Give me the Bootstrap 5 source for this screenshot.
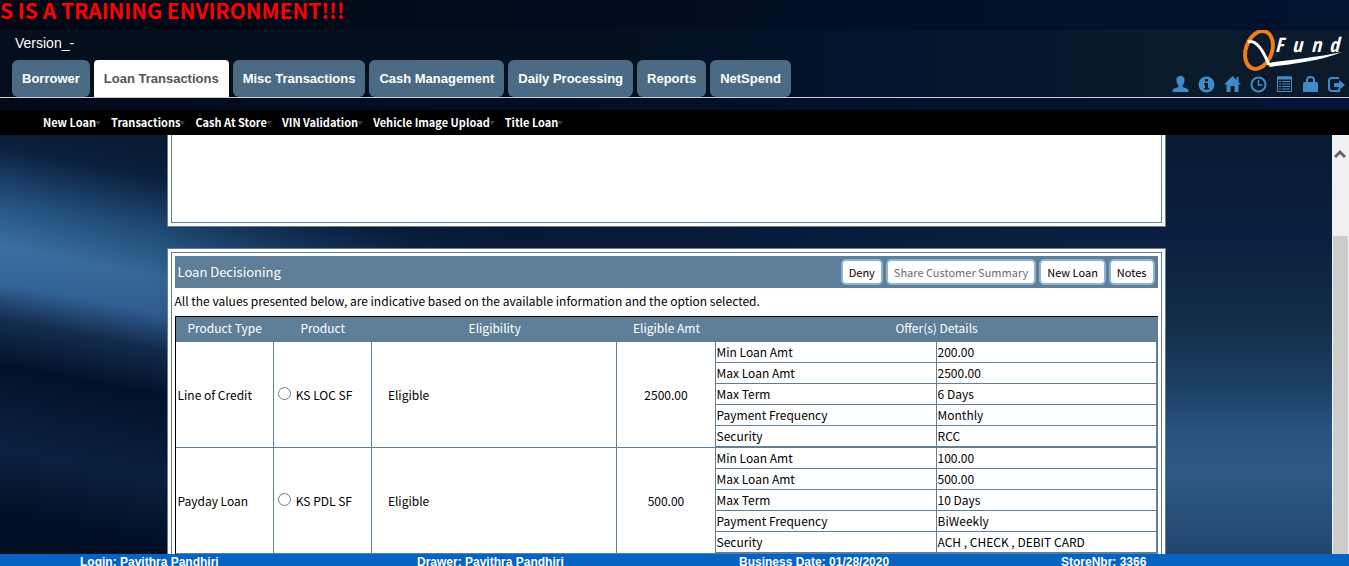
<!DOCTYPE html>
<html lang="en">
<head>
<meta charset="utf-8">
<meta name="viewport" content="width=device-width, initial-scale=1">
<title>QFund - Loan Transactions</title>
<link href="https://cdn.jsdelivr.net/npm/bootstrap@5.3.0/dist/css/bootstrap.min.css" rel="stylesheet">
<style>
  :root { --steel: #5f7f98; --tab: #4b6a84; --icon: #428bca; }
  body { font-family: "Noto Sans CJK SC", "Open Sans", sans-serif; font-size: 12px; line-height: 18px; color: #000; background: #020b1c; }
  .arial { font-family: "Liberation Sans", Arial, sans-serif; }
  .notice { height: 30px; font-size: 21px; line-height: 20px; color: #f00; background: linear-gradient(90deg, #010814, #020d20 50%, #021330); }
  .masthead { background: linear-gradient(90deg, #050f1c, #04101f 45%, #03132c 65%, #091a2b 85%, #0a1a2a); border-bottom: 1px solid #c8ced4; }
  .version { font-size: 14px; line-height: 20px; color: #fff; padding: 3px 15px 7px; }
  .tabs { gap: 4px; padding-left: 12px; }
  .tab-link { font-size: 13px; font-weight: 700; line-height: 37px; padding: 0 10px; color: #fff; background: var(--tab); border-radius: 6px; text-decoration: none; }
  .tab-link.active { color: #555; background: #fff; border-radius: 4px 4px 0 0; }
  .tools { gap: 9px; padding: 0 4px 4px 0; }
  .tools a { display: block; line-height: 0; color: var(--icon); }
  .gap-strip { height: 12px; background: linear-gradient(90deg, #020a1a, #020f27 50%, #041636); }
  .submenu { height: 25px; background: #000; padding-left: 43px; gap: 10px; font-size: 11px; line-height: 25px; }
  .submenu a { color: #fff; font-weight: 700; text-decoration: none; }
  .submenu a::after { content: ""; display: inline-block; border: 3px solid transparent; border-top: 4px solid #3a3a3a; border-bottom: 0; vertical-align: 2px; margin-left: -1px; }
  .stage { min-height: 0; }
  .backdrop { position: absolute; inset: 0; width: 100%; height: 100%; }
  .panel { width: 75%; margin: 0 auto 21px; border: 1px solid var(--steel); padding: 3px; background: #fff; }
  .panel-inner { border: 1px solid var(--steel); padding: 3px; }
  .panel-tail { border-top: 0; padding-top: 0; }
  .panel-tail .panel-inner { border-top: 0; height: 88px; }
  .panel-title { background: var(--steel); color: #fff; font-size: 13px; height: 32px; padding: 0 3px; }
  .acts { gap: 3px; }
  .act { font-size: 11px; line-height: 18px; padding: 2px 6px; border: 2px solid #8ab4d8; border-radius: 5px; background: #fff; color: #000; }
  .act:disabled { color: #6d6d6d; }
  .intro { line-height: 18px; padding: 4px 0 6px; margin: 0; }
  .offers { width: 100%; table-layout: fixed; border-collapse: separate; border-spacing: 0; border-top: 1px solid #000; border-left: 1px solid #000; }
  .offers th { background: var(--steel); color: #fff; font-weight: 400; text-align: center; height: 25px; padding: 0 0 3px; }
  .offers td { height: 21px; line-height: 18px; padding: 0 1px; border-bottom: 1px solid var(--steel); border-right: 1px solid var(--steel); }
  .offers td:first-child[rowspan] { padding-left: 2px; }
  .offers td.last-col { border-right-width: 2px; }
  .offers tr.fin td { border-bottom-width: 2px; height: 22px; }
  .offers .elig { padding-left: 16px; }
  .offers input { width: 13px; height: 13px; margin: 0 5px 2px 3px; }
  .scroller { width: 17px; background: #f0f0f0; }
  .scroller svg { display: block; margin: 14px auto 0 2px; }
  .thumb { background: #cdcdcd; margin: 77px 1px 0; }
  .status { height: 12px; background: #0563c1; color: #fff; font-weight: 700; font-size: 12px; line-height: 17px; display: grid; grid-template-columns: 337fr 322fr 322fr 288fr; padding-left: 80px; }
</style>
</head>
<body>
<div class="d-flex flex-column vh-100 overflow-hidden">
  <div class="notice fw-bold overflow-hidden text-nowrap flex-shrink-0">S IS A TRAINING ENVIRONMENT!!!</div>
  <header class="masthead arial d-flex justify-content-between flex-shrink-0">
    <div>
      <div class="version">Version_-</div>
      <nav class="tabs d-flex" aria-label="Main">
        <a class="tab-link" href="#">Borrower</a>
        <a class="tab-link active" href="#">Loan Transactions</a>
        <a class="tab-link" href="#">Misc Transactions</a>
        <a class="tab-link" href="#">Cash Management</a>
        <a class="tab-link" href="#">Daily Processing</a>
        <a class="tab-link" href="#">Reports</a>
        <a class="tab-link" href="#">NetSpend</a>
      </nav>
    </div>
    <div class="d-flex flex-column align-items-end justify-content-between">
      <svg width="108" height="42" viewBox="0 0 108 42" role="img" aria-label="QFund">
        <ellipse cx="18" cy="20" rx="13" ry="19.500" transform="rotate(20 18 20)" fill="none" stroke="#f07d1a" stroke-width="4"/>
        <path d="M7 12C15 9 22 20 28 35" fill="none" stroke="#fff" stroke-width="3"/>
        <path d="M27 34L30 32.500C48 30 78 27 101 22C80 31 50 34 29 37Z" fill="#fff"/>
        <g font-family="Open Sans Condensed, DejaVu Sans Condensed, Lato, sans-serif" font-size="20" font-weight="700" font-style="italic" fill="#fff"><text x="34" y="22">F</text><text x="51" y="22">u</text><text x="70" y="22">n</text><text x="88" y="22">d</text></g>
      </svg>
      <div class="tools d-flex">
        <a href="#" aria-label="User"><svg width="17" height="17" viewBox="0 0 17 17" fill="currentColor"><path d="M8.500 0C11.500 0 13 2 12.500 5C12.300 7 11.500 8.500 10.500 9.500V11C13 12 16 12.500 16.500 14V16H.5V14C1 12.500 4 12 6.500 11V9.500C5.500 8.500 4.700 7 4.500 5C4 2 5.500 0 8.500 0Z"/></svg></a>
        <a href="#" aria-label="Info"><svg width="17" height="17" viewBox="0 0 17 17"><circle cx="8.500" cy="8.500" r="8" fill="currentColor"/><path d="M7 3h3v2.500H7zM6 7h4v5h1v1.500H6V12h1V8.500H6z" fill="#071727"/></svg></a>
        <a href="#" aria-label="Home"><svg width="17" height="17" viewBox="0 0 17 17" fill="currentColor"><path d="M8.500 0L17 8.500H14.500V16H10.500V10H6.500V16H2.500V8.500H0Z"/><path d="M12.500 1h2v5h-2z"/></svg></a>
        <a href="#" aria-label="Clock"><svg width="17" height="17" viewBox="0 0 17 17" fill="none" stroke="currentColor"><circle cx="8.500" cy="8.500" r="7" stroke-width="2"/><path d="M8.500 4v5h4" stroke-width="1.500"/></svg></a>
        <a href="#" aria-label="List"><svg width="17" height="17" viewBox="0 0 17 17" fill="none" stroke="currentColor"><path d="M1.500 1v14.500h14V1z"/><path d="M1 2h15" stroke-width="3"/><path d="M3 5.500h2M6 5.500h8M3 8h2M6 8h8M3 10.500h2M6 10.500h8M3 13h2M6 13h8"/></svg></a>
        <a href="#" aria-label="Bag"><svg width="17" height="17" viewBox="0 0 17 17"><path d="M1 7.500Q1 6 2.500 6h12Q16 6 16 7.500V16H1z" fill="currentColor"/><path d="M5 7V4Q5 1 8.500 1T12 4V7" fill="none" stroke="currentColor" stroke-width="2"/></svg></a>
        <a href="#" aria-label="Log out"><svg width="17" height="17" viewBox="0 0 17 17"><path d="M11 2H4Q1 2 1 5V12Q1 15 4 15H11V12.500" fill="none" stroke="currentColor" stroke-width="2"/><path d="M6 7h5V4l6 5-6 5v-3H6z" fill="currentColor"/></svg></a>
      </div>
    </div>
  </header>
  <div class="gap-strip flex-shrink-0"></div>
  <nav class="submenu d-flex flex-shrink-0" aria-label="Loan">
    <a href="#">New Loan</a><a href="#">Transactions</a><a href="#">Cash At Store</a><a href="#">VIN Validation</a><a href="#">Vehicle Image Upload</a><a href="#">Title Loan</a>
  </nav>
  <div class="stage d-flex flex-fill overflow-hidden">
    <main class="position-relative flex-fill overflow-hidden">
      <svg class="backdrop" viewBox="0 0 1332 419" preserveAspectRatio="none" aria-hidden="true">
        <defs>
          <linearGradient id="sky" x2="0" y2="1"><stop stop-color="#071a33"/><stop offset=".25" stop-color="#0b2040"/><stop offset=".45" stop-color="#122d49"/><stop offset=".6" stop-color="#1c4064"/><stop offset=".7" stop-color="#28527f"/><stop offset=".8" stop-color="#2d5a84"/><stop offset="1" stop-color="#22466c"/></linearGradient>
          <linearGradient id="night" x2="0" y2="1"><stop stop-color="#061830"/><stop offset=".1" stop-color="#0b213f"/><stop offset=".2" stop-color="#24517f"/><stop offset=".29" stop-color="#3c70a1"/><stop offset=".36" stop-color="#35669a"/><stop offset=".43" stop-color="#142e50"/><stop offset=".52" stop-color="#02112a"/><stop offset=".68" stop-color="#0c2142"/><stop offset=".8" stop-color="#020f25"/><stop offset="1" stop-color="#020c1d"/></linearGradient>
          <linearGradient id="fade"><stop stop-color="#020c1f" stop-opacity="0"/><stop offset=".25" stop-color="#041127" stop-opacity=".1"/><stop offset="1" stop-color="#08193a"/></linearGradient>
          <linearGradient id="blend"><stop offset=".3" stop-color="#08193a"/><stop offset="1" stop-color="#08193a" stop-opacity="0"/></linearGradient>
        </defs>
        <rect width="1332" height="419" fill="url(#sky)"/>
        <rect x="500" width="600" height="419" fill="url(#blend)"/>
        <rect y="-40" width="600" height="520" fill="url(#night)" transform="skewY(11)"/>
        <rect width="600" height="419" fill="url(#fade)"/>
      </svg>
      <div class="position-relative">
        <section class="panel panel-tail"><div class="panel-inner"></div></section>
        <section class="panel">
          <div class="panel-inner">
            <div class="panel-title d-flex align-items-center justify-content-between">
              <span>Loan Decisioning</span>
              <div class="acts d-flex">
                <button class="act" type="button">Deny</button>
                <button class="act" type="button" disabled>Share Customer Summary</button>
                <button class="act" type="button">New Loan</button>
                <button class="act" type="button">Notes</button>
              </div>
            </div>
            <p class="intro">All the values presented below, are indicative based on the available information and the option selected.</p>
            <table class="offers">
              <colgroup><col style="width:10%"><col style="width:10%"><col style="width:25%"><col style="width:10%"><col><col></colgroup>
              <thead><tr><th>Product Type</th><th>Product</th><th>Eligibility</th><th>Eligible Amt</th><th colspan="2">Offer(s) Details</th></tr></thead>
              <tbody>
                <tr><td rowspan="5">Line of Credit</td><td rowspan="5"><div class="d-flex align-items-center"><input type="radio" name="product" id="loc"><label for="loc">KS LOC SF</label></div></td><td rowspan="5" class="elig">Eligible</td><td rowspan="5" class="text-center">2500.00</td><td>Min Loan Amt</td><td class="last-col">200.00</td></tr>
                <tr><td>Max Loan Amt</td><td class="last-col">2500.00</td></tr>
                <tr><td>Max Term</td><td class="last-col">6 Days</td></tr>
                <tr><td>Payment Frequency</td><td class="last-col">Monthly</td></tr>
                <tr class="fin"><td>Security</td><td class="last-col">RCC</td></tr>
              </tbody>
              <tbody>
                <tr><td rowspan="5">Payday Loan</td><td rowspan="5"><div class="d-flex align-items-center"><input type="radio" name="product" id="pdl"><label for="pdl">KS PDL SF</label></div></td><td rowspan="5" class="elig">Eligible</td><td rowspan="5" class="text-center">500.00</td><td>Min Loan Amt</td><td class="last-col">100.00</td></tr>
                <tr><td>Max Loan Amt</td><td class="last-col">500.00</td></tr>
                <tr><td>Max Term</td><td class="last-col">10 Days</td></tr>
                <tr><td>Payment Frequency</td><td class="last-col">BiWeekly</td></tr>
                <tr class="fin"><td>Security</td><td class="last-col">ACH , CHECK , DEBIT CARD</td></tr>
              </tbody>
            </table>
          </div>
        </section>
      </div>
    </main>
    <div class="scroller d-flex flex-column flex-shrink-0" aria-hidden="true">
      <svg width="12" height="10" viewBox="0 0 12 10"><path d="M1 8L6 3L11 8" fill="none" stroke="#606060" stroke-width="3"/></svg>
      <div class="thumb flex-fill"></div>
    </div>
  </div>
  <footer class="status arial overflow-hidden flex-shrink-0">
    <span>Login: Pavithra Pandhiri</span><span>Drawer: Pavithra Pandhiri</span><span>Business Date: 01/28/2020</span><span>StoreNbr: 3366</span>
  </footer>
</div>
<script src="https://cdn.jsdelivr.net/npm/bootstrap@5.3.0/dist/js/bootstrap.bundle.min.js"></script>
</body>
</html>
